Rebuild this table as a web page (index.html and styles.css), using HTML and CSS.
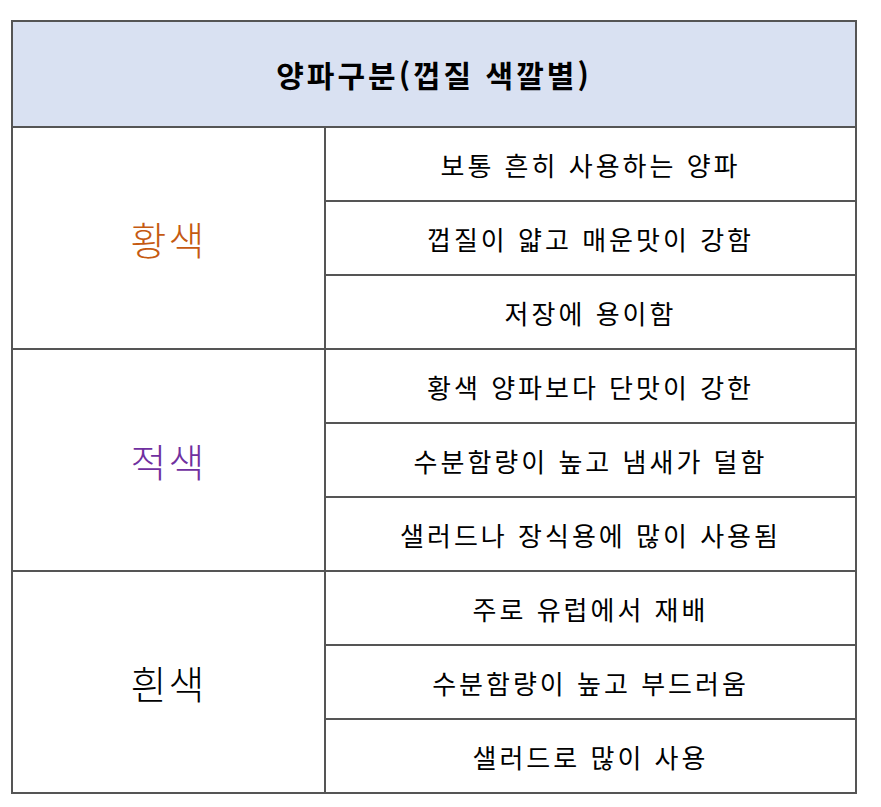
FILE: index.html
```html
<!DOCTYPE html>
<html lang="ko">
<head>
<meta charset="utf-8">
<link rel="stylesheet" href="styles.css">
</head>
<body>
<table class="onion">
  <colgroup>
    <col class="col-label">
    <col class="col-desc">
  </colgroup>
  <thead>
    <tr><th colspan="2" class="head">양파구분(껍질 색깔별)</th></tr>
  </thead>
  <tbody>
    <tr><td rowspan="3" class="label yellow">황색</td><td class="desc">보통 흔히 사용하는 양파</td></tr>
    <tr><td class="desc">껍질이 얇고 매운맛이 강함</td></tr>
    <tr><td class="desc">저장에 용이함</td></tr>
    <tr><td rowspan="3" class="label red">적색</td><td class="desc">황색 양파보다 단맛이 강한</td></tr>
    <tr><td class="desc">수분함량이 높고 냄새가 덜함</td></tr>
    <tr><td class="desc">샐러드나 장식용에 많이 사용됨</td></tr>
    <tr><td rowspan="3" class="label white">흰색</td><td class="desc">주로 유럽에서 재배</td></tr>
    <tr><td class="desc">수분함량이 높고 부드러움</td></tr>
    <tr><td class="desc">샐러드로 많이 사용</td></tr>
  </tbody>
</table>
</body>
</html>
```

FILE: styles.css
```css
html, body {
  margin: 0;
  padding: 0;
  background: #ffffff;
}
body {
  padding: 20px 0 0 11px;
  font-family: "Noto Sans CJK KR", "Noto Sans", sans-serif;
  color: #000;
}
.onion {
  border-collapse: collapse;
  width: 846px;
  table-layout: fixed;
}
.col-label { width: 313px; }
.onion th, .onion td {
  border: 2px solid #555555;
  padding: 0;
  text-align: center;
  vertical-align: middle;
}
.head {
  height: 104px;
  background: #d9e1f2;
  font-size: 30px;
  font-weight: bold;
  letter-spacing: 3px;
}
.label {
  font-size: 39px;
  font-weight: 300;
  letter-spacing: 2px;
  padding-left: 6px;
}
.desc {
  height: 72px;
  font-size: 26px;
  letter-spacing: 3px;
}
.yellow { color: #c55a11; }
.red { color: #7030a0; }
.white { color: #000000; }
```
